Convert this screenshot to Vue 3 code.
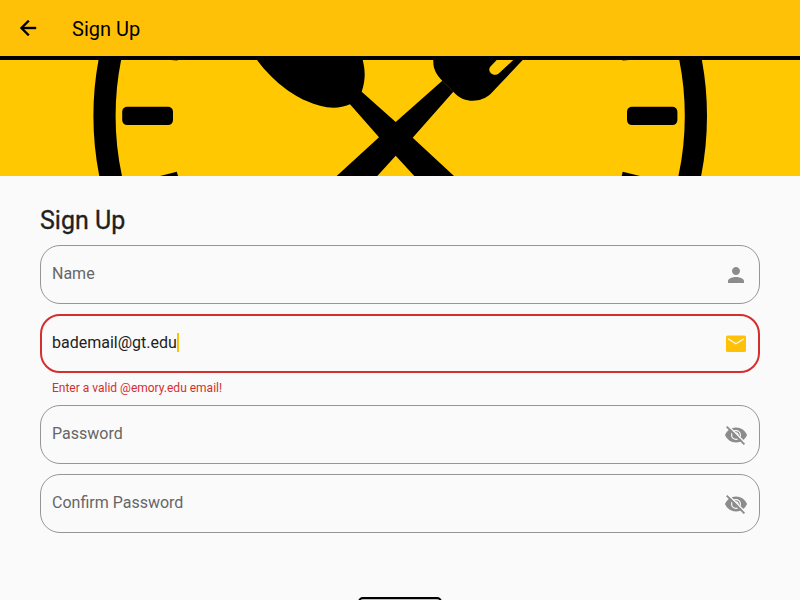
<script setup>
import { ref } from 'vue'

const fields = ref([
  { label: 'Name', value: '', icon: 'person' },
  { label: 'Email', value: 'bademail@gt.edu', icon: 'email', error: 'Enter a valid @emory.edu email!' },
  { label: 'Password', value: '', icon: 'hidden' },
  { label: 'Confirm Password', value: '', icon: 'hidden' },
])
</script>

<template>
  <div class="screen">
    <header class="app-bar">
      <svg class="back" viewBox="0 0 24 24"><path d="M20 11H7.83l5.59-5.59L12 4l-8 8 8 8 1.41-1.41L7.83 13H20v-2z" /></svg>
      <span class="bar-title">Sign Up</span>
    </header>

    <svg class="banner" viewBox="0 60 800 116">
      <circle cx="400.2" cy="116" r="295.7" fill="none" stroke="#000" stroke-width="22.2" />
      <rect x="122.2" y="106.7" width="50.8" height="18.4" rx="5" />
      <rect x="627" y="106.7" width="50.4" height="18.4" rx="5" />
      <path d="M160 176L176.8 171.7L178 176ZM621.7 176L622.7 171.7L640 176ZM171 60H177.5V60.6ZM622.5 60H629L622.5 60.6Z" />
      <path d="M257 60C268 75 287 93 306.7 101C321 107.500 336 110.500 350 104.300L379 137.300L336.700 176H377.300L395.700 155.700L414.300 176H454L412.700 137.700L453.300 91.700C460 99 466 100.700 472.700 100.700C480 100.700 486 98 490.500 94L522.700 60H513.300L499 73.300C493 78 486.500 71 490.500 66.500L496.700 60H433.300C433 69 436 74 442.300 80.700L395.700 122L361.700 91.700C365.500 80 365.500 71 362.700 60Z" />
      <path class="seam" d="M442.300 80.700L453.300 91.700" />
    </svg>

    <main class="form">
      <h1>Sign Up</h1>
      <div v-for="field in fields" :key="field.label" class="field" :class="{ invalid: field.error }">
        <div class="box">
          <span v-if="field.value" class="value">{{ field.value }}<i class="caret"></i></span>
          <span v-else class="label">{{ field.label }}</span>
          <svg class="icon" viewBox="0 0 24 24">
            <path v-if="field.icon === 'person'" d="M12 12c2.21 0 4-1.79 4-4s-1.79-4-4-4-4 1.79-4 4 1.79 4 4 4zm0 2c-2.67 0-8 1.34-8 4v2h16v-2c0-2.66-5.33-4-8-4z" />
            <template v-else-if="field.icon === 'email'">
              <rect x="2" y="3.500" width="20" height="16.500" rx="1.600" />
              <path class="cut" d="M4 6.800l8 5 8-5" />
            </template>
            <template v-else>
              <path d="M12 4.500C7 4.500 2.730 7.610 1 12c1.730 4.390 6 7.500 11 7.500s9.270-3.110 11-7.500c-1.730-4.390-6-7.500-11-7.500z" />
              <circle class="cut" cx="12" cy="12" r="4.400" />
              <path class="cut" d="M11.500 9.900a2.100 2.100 0 0 1 2.500 2.500" />
              <path class="cut gap" d="M4 2.600L22 20.600" />
              <path class="slash" d="M2.700 3.700L20.400 21.400" />
            </template>
          </svg>
        </div>
        <p v-if="field.error" class="error">{{ field.error }}</p>
      </div>
      <button class="submit" aria-label="Sign Up"></button>
    </main>
  </div>
</template>

<style>
body {
  margin: 0;
  background: #fafafa;
}
</style>

<style scoped>
.screen {
  width: 100%;
  height: 600px;
  overflow: hidden;
  background: #fafafa;
  font-family: Roboto, sans-serif;
}
.app-bar {
  box-sizing: border-box;
  height: 60px;
  display: flex;
  align-items: center;
  padding: 0 16px;
  background: #ffc107;
  border-bottom: 4px solid #000;
}
.back {
  width: 24px;
  height: 24px;
  stroke: #000;
  stroke-width: 0.4;
}
.bar-title {
  margin-left: 32px;
  padding-top: 2px;
  font-size: 20px;
  line-height: 24px;
  color: #000;
}
.banner {
  display: block;
  width: 800px;
  height: 116px;
  background: #ffc800;
}
.seam {
  stroke: #4a3900;
  stroke-width: 0.6;
}
.form {
  display: flex;
  flex-direction: column;
  padding: 30px 40px 0;
}
h1 {
  margin: 0 0 9px;
  font-size: 25px;
  line-height: 30px;
  font-weight: 400;
  color: #212121;
  -webkit-text-stroke: 0.3px #212121;
}
.field {
  margin-bottom: 10px;
}
.box {
  box-sizing: border-box;
  height: 59px;
  display: flex;
  align-items: center;
  justify-content: space-between;
  padding: 0 11px;
  border: 1px solid #969696;
  border-radius: 20px;
  font-size: 16px;
  line-height: 20px;
}
.label,
.value {
  padding-bottom: 2px;
}
.label {
  color: #666;
}
.value {
  display: flex;
  align-items: center;
  color: #212121;
}
.caret {
  width: 2px;
  height: 19px;
  background: #ffc107;
}
.icon {
  width: 24px;
  height: 24px;
  fill: #8c8c8c;
}
.cut {
  fill: none;
  stroke: #fafafa;
  stroke-width: 1.2;
}
.gap {
  stroke-width: 1.4;
}
.slash {
  fill: none;
  stroke: #8c8c8c;
  stroke-width: 1.9;
}
.invalid .box {
  padding: 0 10px;
  border: 2px solid #d32f2f;
}
.invalid .icon {
  fill: #ffc107;
}
.error {
  margin: 8px 12px 0;
  font-size: 12px;
  line-height: 14px;
  color: #d32f2f;
}
.submit {
  box-sizing: border-box;
  align-self: center;
  width: 84px;
  height: 36px;
  margin-top: 54px;
  border: 2px solid #000;
  border-radius: 5px;
  background: #ffc107;
}
</style>
